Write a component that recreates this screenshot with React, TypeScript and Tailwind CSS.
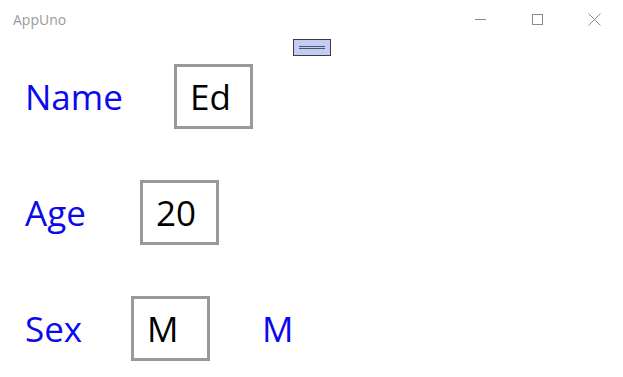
import React from 'react';

function TitleBar() {
  return (
    <div className="relative flex h-[38px] items-center">
      <span className="pl-[13px] text-[14px] text-[#9a9a9a]" style={{ fontFamily: '"Open Sans", sans-serif' }}>
        AppUno
      </span>
      <div className="ml-auto flex h-full items-center">
        <div className="flex h-full w-[57px] items-center justify-center">
          <div className="h-px w-[11px] bg-[#8a8a8a]" />
        </div>
        <div className="flex h-full w-[57px] items-center justify-center">
          <div className="h-[11px] w-[11px] border border-[#8a8a8a]" />
        </div>
        <div className="flex h-full w-[57px] items-center justify-center">
          <svg width="13" height="13" viewBox="0 0 13 13">
            <path d="M0.5 0.5 L12.5 12.5 M12.5 0.5 L0.5 12.5" stroke="#8a8a8a" strokeWidth="1" fill="none" />
          </svg>
        </div>
      </div>
    </div>
  );
}

function Row({ label, labelWidth, value, extra }: { label: string; labelWidth: string; value: string; extra?: string }) {
  return (
    <div className="flex items-center">
      <span className={`${labelWidth} text-[35px] leading-none text-[#0a0aeb]`}>{label}</span>
      <div className="flex h-[65px] w-[79px] items-center border-[3px] border-[#999999] bg-white pl-[13px]">
        <span className="text-[35px] leading-none text-black">{value}</span>
      </div>
      {extra && <span className="ml-[52px] text-[35px] leading-none text-[#0a0aeb]">{extra}</span>}
    </div>
  );
}

export default function App() {
  return (
    <div className="flex h-[377px] w-[623px] flex-col bg-white" style={{ fontFamily: '"Open Sans", sans-serif' }}>
      <TitleBar />
      <div className="mx-auto mt-[1px] flex h-[17px] w-[38px] items-center justify-center border border-[#3a3a4a] bg-[#c4ccf0]">
        <div className="flex w-[26px] flex-col gap-[1px]">
          <div className="h-px bg-[#4a5275]" />
          <div className="h-px bg-[#4a5275]" />
        </div>
      </div>
      <div className="flex flex-col gap-[51px] pl-[25px] pt-[8px]">
        <Row label="Name" labelWidth="w-[149px]" value="Ed" />
        <Row label="Age" labelWidth="w-[115px]" value="20" />
        <Row label="Sex" labelWidth="w-[106px]" value="M" extra="M" />
      </div>
    </div>
  );
}
